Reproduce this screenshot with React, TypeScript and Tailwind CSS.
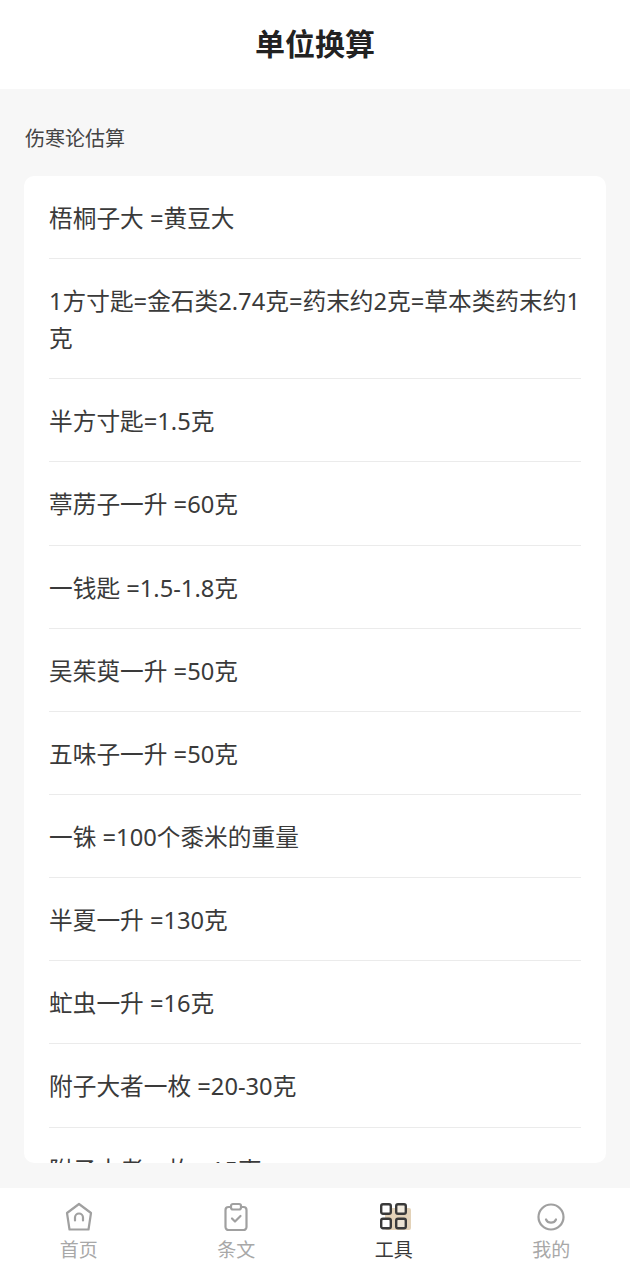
const items = [
  "梧桐子大 =黄豆大",
  "1方寸匙=金石类2.74克=药末约2克=草本类药末约1克",
  "半方寸匙=1.5克",
  "葶苈子一升 =60克",
  "一钱匙 =1.5-1.8克",
  "吴茱萸一升 =50克",
  "五味子一升 =50克",
  "一铢 =100个黍米的重量",
  "半夏一升 =130克",
  "虻虫一升 =16克",
  "附子大者一枚 =20-30克",
  "附子中者一枚 =15克",
];

function HomeIcon() {
  return (
    <svg width="30" height="30" viewBox="0 0 30 30" fill="none" stroke="#a0a0a0" strokeWidth="2.2" strokeLinejoin="round" strokeLinecap="round">
      <path d="M15 2 L27 11 L24.5 27.5 H5.5 L3 11 Z" />
      <path d="M11 18.5 V15.5 a4 4 0 0 1 8 0 V18.5" />
    </svg>
  );
}

function ClipboardIcon() {
  return (
    <svg width="30" height="30" viewBox="0 0 30 30" fill="none" stroke="#a0a0a0" strokeWidth="2.2" strokeLinejoin="round" strokeLinecap="round">
      <path d="M10 5 H7.5 a3 3 0 0 0 -3 3 V25 a3 3 0 0 0 3 3 H22.5 a3 3 0 0 0 3 -3 V8 a3 3 0 0 0 -3 -3 H20" />
      <rect x="10" y="2" width="10" height="5.5" rx="2" />
      <path d="M11 16.5 L14 19.5 L19.5 14" />
    </svg>
  );
}

function GridIcon() {
  return (
    <svg width="34" height="32" viewBox="0 0 34 32" fill="none">
      <rect x="8" y="7" width="26" height="22" rx="2" fill="#dcc7a6" opacity="0.8" />
      <g stroke="#3a3a3a" strokeWidth="2.4">
        <rect x="4.2" y="3.2" width="9.6" height="9.6" rx="1.8" fill="#ffffff" />
        <rect x="19.2" y="3.2" width="9.6" height="9.6" rx="1.8" fill="#f3ece0" />
        <rect x="4.2" y="17.7" width="9.6" height="9.6" rx="1.8" fill="#ffffff" />
        <rect x="19.2" y="17.7" width="9.6" height="9.6" rx="1.8" fill="#ece3d3" />
      </g>
    </svg>
  );
}

function SmileIcon() {
  return (
    <svg width="30" height="30" viewBox="0 0 30 30" fill="none" stroke="#a0a0a0" strokeWidth="2.2" strokeLinecap="round">
      <circle cx="15" cy="15" r="12.5" />
      <path d="M10 17.5 a5.5 5.5 0 0 0 10 0" />
    </svg>
  );
}

const tabs = [
  { label: "首页", icon: <HomeIcon /> },
  { label: "条文", icon: <ClipboardIcon /> },
  { label: "工具", icon: <GridIcon />, active: true },
  { label: "我的", icon: <SmileIcon /> },
];

export default function App() {
  return (
    <div className="flex h-[1280px] w-[630px] flex-col overflow-hidden bg-[#f7f7f7] font-['Noto_Sans','Noto_Sans_CJK_SC',sans-serif]">
      <header className="flex h-[89px] shrink-0 items-center justify-center bg-white pb-[2px]">
        <h1 className="text-[30px] font-bold text-[#222222]">单位换算</h1>
      </header>

      <main className="flex min-h-0 flex-1 flex-col px-[24px] pb-[25px]">
        <p className="pt-[35px] pb-[22px] pl-[1px] text-[20px] leading-[30px] text-[#444444]">伤寒论估算</p>
        <div className="min-h-0 flex-1 overflow-hidden rounded-[10px] bg-white px-[25px]">
          {items.map((item) => (
            <div
              className="border-b border-[#ebebeb] pt-[24px] pb-[21.15px] text-[23.7px] leading-[37px] text-[#3a3a3a]"
              key={item}
            >
              {item}
            </div>
          ))}
        </div>
      </main>

      <nav className="grid h-[92px] shrink-0 grid-cols-4 bg-white">
        {tabs.map((tab) => (
          <div className="flex flex-col items-center pt-[13px]" key={tab.label}>
            <div className="flex h-[32px] items-center justify-center">{tab.icon}</div>
            <span className={`mt-[3px] text-[19px] leading-[28px] ${tab.active ? "text-[#3a3a3a]" : "text-[#a8a8a8]"}`}>
              {tab.label}
            </span>
          </div>
        ))}
      </nav>
    </div>
  );
}
